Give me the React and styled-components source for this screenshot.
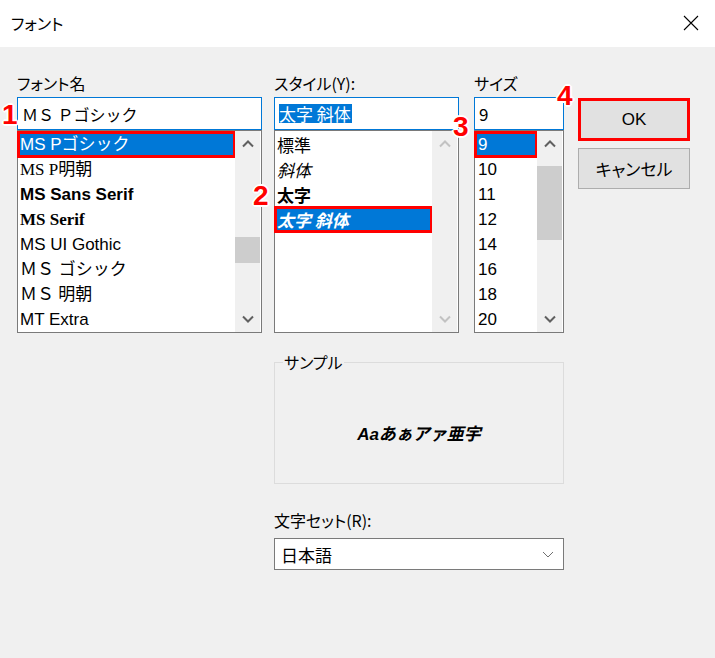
import React from 'react';
import styled, { createGlobalStyle } from 'styled-components';

const GlobalStyle = createGlobalStyle`
  html, body {
    margin: 0;
    padding: 0;
    background: #f0f0f0;
  }
  body {
    font-family: "Noto Sans CJK JP", "Liberation Sans", sans-serif;
    color: #000;
  }
`;

const fontItems = [
  { label: 'MS Pゴシック', face: 'sans', selected: true },
  { label: 'MS P明朝', face: 'serif' },
  { label: 'MS Sans Serif', face: 'sans', bold: true },
  { label: 'MS Serif', face: 'serif', bold: true },
  { label: 'MS UI Gothic', face: 'sans' },
  { label: 'ＭＳ ゴシック', face: 'sans' },
  { label: 'ＭＳ 明朝', face: 'serif' },
  { label: 'MT Extra', face: 'sans' },
];

const styleItems = [
  { label: '標準' },
  { label: '斜体', italic: true },
  { label: '太字', bold: true },
  { label: '太字 斜体', bold: true, italic: true, selected: true },
];

const sizeItems = ['9', '10', '11', '12', '14', '16', '18', '20'];

function Chevron({ down, disabled }) {
  return (
    <svg width="12" height="8" viewBox="0 0 12 8">
      <path
        d={down ? 'M1 1.5 L6 6.5 L11 1.5' : 'M1 6.5 L6 1.5 L11 6.5'}
        fill="none"
        stroke={disabled ? '#c2c2c2' : '#606060'}
        strokeWidth="2"
      />
    </svg>
  );
}

function ScrollBar({ thumbTop, thumbSize, disabled }) {
  return (
    <Scroll>
      <ArrowButton><Chevron disabled={disabled} /></ArrowButton>
      <Track>
        {!disabled && <Thumb $top={thumbTop} $size={thumbSize} />}
      </Track>
      <ArrowButton><Chevron down disabled={disabled} /></ArrowButton>
    </Scroll>
  );
}

export default function App() {
  return (
    <>
      <GlobalStyle />
      <Window>
        <TitleBar>
          <Title>フォント</Title>
          <CloseButton>
            <svg width="16" height="16" viewBox="0 0 16 16">
              <path d="M1 1 L15 15 M15 1 L1 15" stroke="#000" strokeWidth="1.1" />
            </svg>
          </CloseButton>
        </TitleBar>

        <Body>
          <TopRow>
            <Column $width={245} $gap={12}>
              <Label>フォント名</Label>
              <Input $size={16}>ＭＳ Ｐゴシック</Input>
              <ListBox>
                <Items>
                  {fontItems.map(item => (
                    <Row
                      key={item.label}
                      $selected={item.selected}
                      $face={item.face}
                      $bold={item.bold}
                    >
                      {item.label}
                    </Row>
                  ))}
                </Items>
                <ScrollBar thumbTop={80} thumbSize={26} />
              </ListBox>
            </Column>

            <Column $width={185} $gap={15}>
              <Label>スタイル(Y):</Label>
              <Input>
                <Highlight>太字 斜体</Highlight>
              </Input>
              <ListBox>
                <Items>
                  {styleItems.map(item => (
                    <Row
                      key={item.label}
                      $selected={item.selected}
                      $bold={item.bold}
                      $italic={item.italic}
                    >
                      {item.label}
                    </Row>
                  ))}
                </Items>
                <ScrollBar disabled />
              </ListBox>
            </Column>

            <Column $width={90} $gap={14}>
              <Label>サイズ</Label>
              <Input $pad={4}>9</Input>
              <ListBox>
                <Items>
                  {sizeItems.map((size, i) => (
                    <Row key={size} $selected={i === 0} $face="sans" $pad={3}>
                      {size}
                    </Row>
                  ))}
                </Items>
                <ScrollBar thumbTop={9} thumbSize={74} />
              </ListBox>
            </Column>

            <ButtonColumn>
              <DialogButton $primary>OK</DialogButton>
              <DialogButton>キャンセル</DialogButton>
            </ButtonColumn>
          </TopRow>

          <LowerSection>
            <GroupBox>
              <Legend>サンプル</Legend>
              <SampleText>Aaあぁアァ亜宇</SampleText>
            </GroupBox>
            <Label $top={24}>文字セット(R):</Label>
            <Select>
              <span>日本語</span>
              <svg width="12" height="7" viewBox="0 0 12 7">
                <path d="M1 1 L6 6 L11 1" fill="none" stroke="#707070" strokeWidth="1" />
              </svg>
            </Select>
          </LowerSection>
        </Body>

        <Badge $x={2} $y={101}>1</Badge>
        <Badge $x={253} $y={182}>2</Badge>
        <Badge $x={453} $y={113}>3</Badge>
        <Badge $x={557} $y={82}>4</Badge>
      </Window>
    </>
  );
}

const Window = styled.div`
  position: relative;
  width: 715px;
  height: 658px;
  background: #f0f0f0;
  overflow: hidden;
`;

const TitleBar = styled.div`
  height: 47px;
  background: #fff;
  display: flex;
  align-items: center;
  justify-content: space-between;
  padding: 0 16px 0 11px;
  box-sizing: border-box;
`;

const Title = styled.div`
  font-size: 16px;
  font-feature-settings: "palt";
  padding-bottom: 2px;
`;

const CloseButton = styled.div`
  display: flex;
  align-items: center;
  padding-bottom: 2px;
`;

const Body = styled.div`
  padding-left: 17px;
`;

const TopRow = styled.div`
  display: flex;
  align-items: flex-start;
`;

const Column = styled.div`
  display: flex;
  flex-direction: column;
  width: ${p => p.$width}px;
  margin-right: ${p => p.$gap}px;
`;

const Label = styled.div`
  font-size: 16px;
  line-height: 24px;
  height: 24px;
  margin-top: ${p => (p.$top !== undefined ? p.$top : 24)}px;
  margin-bottom: ${p => (p.$top !== undefined ? 6 : 2)}px;
  font-feature-settings: "palt";
  white-space: nowrap;
`;

const Input = styled.div`
  height: 33px;
  box-sizing: border-box;
  border: 1px solid #0078d7;
  background: #fff;
  display: flex;
  align-items: center;
  padding-left: ${p => p.$pad || 4}px;
  font-size: ${p => p.$size || 17}px;
  white-space: nowrap;
`;

const Highlight = styled.span`
  background: #0078d7;
  color: #fff;
  line-height: 19px;
  padding-right: 1px;
`;

const ListBox = styled.div`
  height: 203px;
  box-sizing: border-box;
  border: 1px solid #7a7a7a;
  background: #fff;
  display: flex;
`;

const Items = styled.div`
  flex: 1;
  padding-top: 1px;
  min-width: 0;
`;

const Row = styled.div`
  height: 25px;
  line-height: 25px;
  padding-left: ${p => p.$pad || 2}px;
  font-size: 17px;
  white-space: nowrap;
  overflow: hidden;
  font-family: ${p =>
    p.$face === 'serif'
      ? '"Liberation Serif", "Noto Sans CJK JP", serif'
      : p.$face === 'sans'
        ? '"Liberation Sans", "Noto Sans CJK JP", sans-serif'
        : '"Noto Sans CJK JP", sans-serif'};
  font-weight: ${p => (p.$bold ? 700 : 400)};
  font-style: ${p => (p.$italic ? 'italic' : 'normal')};
  background: ${p => (p.$selected ? '#0078d7' : 'transparent')};
  color: ${p => (p.$selected ? '#fff' : '#000')};
  outline: ${p => (p.$selected ? '3px solid #ff0000' : 'none')};
  outline-offset: -2px;
`;

const Scroll = styled.div`
  width: 25px;
  margin-right: 1px;
  background: #f0f0f0;
  display: flex;
  flex-direction: column;
`;

const ArrowButton = styled.div`
  height: 26px;
  display: flex;
  align-items: center;
  justify-content: center;
`;

const Track = styled.div`
  flex: 1;
  display: flex;
  flex-direction: column;
`;

const Thumb = styled.div`
  margin-top: ${p => p.$top}px;
  height: ${p => p.$size}px;
  background: #cdcdcd;
`;

const ButtonColumn = styled.div`
  display: flex;
  flex-direction: column;
  width: 112px;
  padding-top: 51px;
  gap: 7px;
`;

const DialogButton = styled.div`
  height: ${p => (p.$primary ? 43 : 41)}px;
  box-sizing: border-box;
  border: ${p => (p.$primary ? '3px solid #ff0000' : '1px solid #adadad')};
  background: #e1e1e1;
  display: flex;
  align-items: center;
  justify-content: center;
  font-size: 17px;
  font-feature-settings: "palt";
  font-family: "Liberation Sans", "Noto Sans CJK JP", sans-serif;
`;

const LowerSection = styled.div`
  margin-left: 257px;
  width: 290px;
  display: flex;
  flex-direction: column;
`;

const GroupBox = styled.div`
  position: relative;
  margin-top: 29px;
  height: 122px;
  box-sizing: border-box;
  border: 1px solid #dcdcdc;
  padding-top: 18px;
  display: flex;
  align-items: center;
  justify-content: center;
`;

const Legend = styled.div`
  position: absolute;
  top: -13px;
  left: 8px;
  padding: 0 1px;
  background: #f0f0f0;
  font-size: 16px;
  line-height: 24px;
  font-feature-settings: "palt";
`;

const SampleText = styled.div`
  font-size: 17px;
  font-weight: 700;
  font-style: italic;
  font-family: "Liberation Sans", "Noto Sans CJK JP", sans-serif;
`;

const Select = styled.div`
  height: 32px;
  box-sizing: border-box;
  border: 1px solid #7a7a7a;
  background: #fff;
  display: flex;
  align-items: center;
  justify-content: space-between;
  padding: 0 9px 0 6px;
  font-size: 17px;
`;

const Badge = styled.div`
  position: absolute;
  left: ${p => p.$x}px;
  top: ${p => p.$y}px;
  font-family: "Liberation Sans", sans-serif;
  font-weight: 700;
  font-size: 28px;
  line-height: 1;
  color: #ff0000;
  text-shadow:
    -2px 0 #fff, 2px 0 #fff, 0 -2px #fff, 0 2px #fff,
    -1px -1px #fff, 1px -1px #fff, -1px 1px #fff, 1px 1px #fff;
`;
